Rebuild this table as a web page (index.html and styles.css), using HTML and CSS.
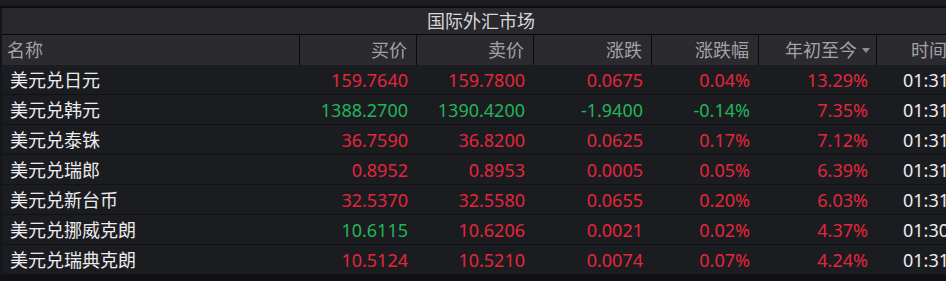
FILE: index.html
```html
<!DOCTYPE html>
<html lang="zh-CN">
<head>
<meta charset="utf-8">
<title>国际外汇市场</title>
<link rel="stylesheet" href="styles.css">
</head>
<body>
<div class="topbar"></div>
<div class="board">
  <div class="title">国际外汇市场</div>
  <div class="row head">
    <div class="c name">名称</div>
    <div class="c">买价</div>
    <div class="c">卖价</div>
    <div class="c">涨跌</div>
    <div class="c">涨跌幅</div>
    <div class="c sort">年初至今<span class="arrow"></span></div>
    <div class="c time">时间</div>
  </div>
  <div class="row">
    <div class="c name">美元兑日元</div>
    <div class="c up">159.7640</div><div class="c up">159.7800</div><div class="c up">0.0675</div><div class="c up">0.04%</div><div class="c up ytd">13.29%</div><div class="c time">01:31</div>
  </div>
  <div class="row">
    <div class="c name">美元兑韩元</div>
    <div class="c down">1388.2700</div><div class="c down">1390.4200</div><div class="c down">-1.9400</div><div class="c down">-0.14%</div><div class="c up ytd">7.35%</div><div class="c time">01:31</div>
  </div>
  <div class="row">
    <div class="c name">美元兑泰铢</div>
    <div class="c up">36.7590</div><div class="c up">36.8200</div><div class="c up">0.0625</div><div class="c up">0.17%</div><div class="c up ytd">7.12%</div><div class="c time">01:31</div>
  </div>
  <div class="row">
    <div class="c name">美元兑瑞郎</div>
    <div class="c up">0.8952</div><div class="c up">0.8953</div><div class="c up">0.0005</div><div class="c up">0.05%</div><div class="c up ytd">6.39%</div><div class="c time">01:31</div>
  </div>
  <div class="row">
    <div class="c name">美元兑新台币</div>
    <div class="c up">32.5370</div><div class="c up">32.5580</div><div class="c up">0.0655</div><div class="c up">0.20%</div><div class="c up ytd">6.03%</div><div class="c time">01:31</div>
  </div>
  <div class="row">
    <div class="c name">美元兑挪威克朗</div>
    <div class="c down">10.6115</div><div class="c up">10.6206</div><div class="c up">0.0021</div><div class="c up">0.02%</div><div class="c up ytd">4.37%</div><div class="c time">01:30</div>
  </div>
  <div class="row">
    <div class="c name">美元兑瑞典克朗</div>
    <div class="c up">10.5124</div><div class="c up">10.5210</div><div class="c up">0.0074</div><div class="c up">0.07%</div><div class="c up ytd">4.24%</div><div class="c time">01:31</div>
  </div>
</div>
</body>
</html>
```

FILE: styles.css
```css
html, body {
  margin: 0;
  padding: 0;
  background: #101114;
  overflow: hidden;
}
body {
  width: 946px;
  height: 281px;
  font-family: "Noto Sans", "Noto Sans CJK SC", sans-serif;
  font-size: 18px;
}
.topbar {
  height: 6px;
  background: #1c1d21;
  border-bottom: 2px solid #0c0d10;
}
.board {
  width: 960px;
  border-left: 2px solid #141519;
  box-sizing: border-box;
}
.title {
  height: 26px;
  line-height: 27px;
  background: #28282d;
  color: #d6d6d8;
  text-align: center;
  border-bottom: 1px solid #0a0a0c;
}
.row {
  display: grid;
  grid-template-columns: 298px 117px 117px 118px 107px 118px 83px;
  height: 29px;
  line-height: 30px;
  background: #1b1c20;
  border-bottom: 1px solid #111215;
}
.row.head {
  height: 30px;
  line-height: 30px;
  background: #2a2a2f;
  border-bottom: 0;
  color: #a2a2a8;
}
.head .c {
  border-right: 1px solid #0b0b0e;
}
.head .c.time { border-right: 0; }
.c {
  text-align: right;
  padding-right: 9px;
  white-space: nowrap;
  overflow: hidden;
}
.c.name {
  text-align: left;
  padding-left: 8px;
  color: #ececee;
}
.head .c.name { color: #a2a2a8; padding-left: 5px; }
.c.sort { padding-right: 6px; }
.arrow {
  display: inline-block;
  width: 0;
  height: 0;
  margin-left: 5px;
  vertical-align: 4px;
  border-left: 4px solid transparent;
  border-right: 4px solid transparent;
  border-top: 5px solid #8e8e94;
}
.c.time {
  color: #ececee;
  text-align: left;
  padding-right: 0;
  padding-left: 26px;
}
.head .c.time { color: #a2a2a8; padding-left: 34px; }
.up { color: #e3263c; }
.down { color: #22b45a; }
```
